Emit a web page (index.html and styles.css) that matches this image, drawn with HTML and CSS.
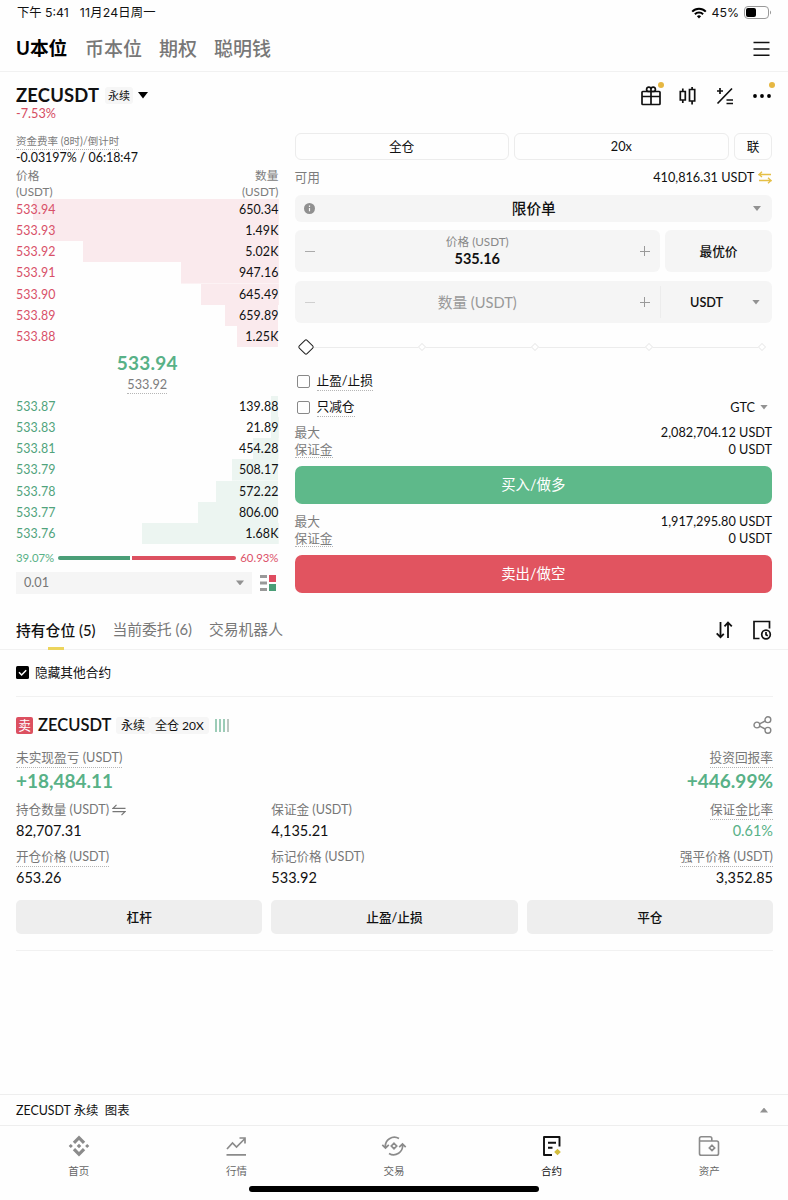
FILE: index.html
```html
<!DOCTYPE html>
<html lang="zh-CN">
<head>
  <meta charset="UTF-8">
  <meta name="viewport" content="width=device-width, initial-scale=1.0">
  <title>ZECUSDT 永续</title>
  <link rel="stylesheet" href="styles.css">
</head>
<body>
  <div class="status-bar">
    <span>下午 5:41</span>
    <span class="status-date">11月24日周一</span>
    <div class="status-right">
      <svg width="16" height="12" viewBox="0 0 16 12" fill="none" stroke="#000" stroke-width="2"><path d="M1.2 4.6a9.6 9.6 0 0 1 13.6 0M3.9 7.3a5.8 5.8 0 0 1 8.2 0"/><path d="M8 11.4 5.9 9.3a3 3 0 0 1 4.2 0z" fill="#000" stroke="none"/></svg>
      <span>45%</span>
      <svg width="28" height="13" viewBox="0 0 28 13"><rect x=".5" y=".5" width="24" height="12" rx="3.5" fill="none" stroke="#999"/><rect x="2" y="2" width="10" height="9" rx="2"/><path d="M26 4.5v4c1.4-.6 1.4-3.4 0-4z" fill="#999"/></svg>
    </div>
  </div>

  <header class="header">
    <span class="active">U本位</span>
    <span>币本位</span>
    <span>期权</span>
    <span>聪明钱</span>
    <svg class="push" width="17" height="16" viewBox="0 0 17 16" stroke="#111" stroke-width="1.6"><path d="M.5 1.5h16M.5 8h16M.5 14.3h16"/></svg>
  </header>

  <section class="symbol">
    <div class="symbol-row">
      <h1>ZECUSDT</h1>
      <span class="tag tag-small">永续</span>
      <svg class="symbol-arrow" width="10" height="7" viewBox="0 0 10 7"><path d="M0 0h10L5 6.5z"/></svg>
      <div class="tools">
        <span class="tool dot">
          <svg width="22" height="22" viewBox="0 0 22 22" fill="none" stroke="#111" stroke-width="1.7"><rect x="2" y="6.5" width="18" height="13" rx=".8"/><path d="M2 11.500h18M11 6.500v13M11 6.500H8.300A2.200 2.200 0 1 1 11 4.200zM11 6.500h2.700A2.200 2.200 0 1 0 11 4.200z"/></svg>
        </span>
        <span class="tool">
          <svg width="22" height="22" viewBox="0 0 22 22" fill="none" stroke="#111" stroke-width="1.7"><path d="M3.300 6.500h5v8.500h-5zM5.800 3.500v3M5.800 15v3M12.500 4.500h5.200v11.500h-5.200zM15.100 2v2.500M15.100 16v3.500"/></svg>
        </span>
        <span class="tool">
          <svg width="22" height="22" viewBox="0 0 22 22" fill="none" stroke="#111" stroke-width="1.7"><path d="M3.500 18.500 18 3.500M6 3v6M3 6h6M12.500 15H19M12.500 18.500H19"/></svg>
        </span>
        <span class="tool dot">
          <svg width="22" height="22" viewBox="0 0 22 22"><circle cx="4" cy="11" r="1.9"/><circle cx="11" cy="11" r="1.9"/><circle cx="18" cy="11" r="1.9"/></svg>
        </span>
      </div>
    </div>
    <div class="change">-7.53%</div>
  </section>

  <main class="trade">
    <section class="book">
      <div class="funding">
        <span class="dotted">资金费率 (8时)/倒计时</span>
        <div>-0.03197% / 06:18:47</div>
      </div>
      <div class="book-head">
        <span>价格<br>(USDT)</span>
        <span>数量<br>(USDT)</span>
      </div>
      <div class="asks">
        <div class="level" style="--depth: 93.5%"><span>533.94</span><b>650.34</b></div>
        <div class="level" style="--depth: 87%"><span>533.93</span><b>1.49K</b></div>
        <div class="level" style="--depth: 74.5%"><span>533.92</span><b>5.02K</b></div>
        <div class="level" style="--depth: 37.2%"><span>533.91</span><b>947.16</b></div>
        <div class="level" style="--depth: 29.6%"><span>533.90</span><b>645.49</b></div>
        <div class="level" style="--depth: 20.3%"><span>533.89</span><b>659.89</b></div>
        <div class="level" style="--depth: 15.6%"><span>533.88</span><b>1.25K</b></div>
      </div>
      <div class="last">
        <div class="last-price">533.94</div>
        <span class="dotted">533.92</span>
      </div>
      <div class="bids">
        <div class="level" style="--depth: 2.7%"><span>533.87</span><b>139.88</b></div>
        <div class="level" style="--depth: 3%"><span>533.83</span><b>21.89</b></div>
        <div class="level" style="--depth: 9.7%"><span>533.81</span><b>454.28</b></div>
        <div class="level" style="--depth: 17.5%"><span>533.79</span><b>508.17</b></div>
        <div class="level" style="--depth: 23.7%"><span>533.78</span><b>572.22</b></div>
        <div class="level" style="--depth: 30.5%"><span>533.77</span><b>806.00</b></div>
        <div class="level" style="--depth: 52%"><span>533.76</span><b>1.68K</b></div>
      </div>
      <div class="ratio">
        <span class="green">39.07%</span>
        <i class="ratio-buy" style="flex-grow: 41"></i>
        <i class="ratio-sell" style="flex-grow: 59"></i>
        <span class="red">60.93%</span>
      </div>
      <div class="book-foot">
        <div class="step">0.01 <i class="caret"></i></div>
        <svg width="16" height="16" viewBox="0 0 16 16"><path d="M0 0h7v3H0zM0 6.5h7v3H0zM0 13h7v3H0z" fill="#999"/><path d="M9 0h7v7H9z" fill="#df4c60"/><path d="M9 9h7v7H9z" fill="#4a9e77"/></svg>
      </div>
    </section>

    <section class="order">
      <div class="modes">
        <span>全仓</span>
        <span>20x</span>
        <span>联</span>
      </div>
      <div class="line available">
        <span class="muted">可用</span>
        <span>410,816.31 USDT
          <svg width="14" height="13" viewBox="0 0 14 13" fill="none" stroke="#e5bf45" stroke-width="1.3"><path d="M13 3.500H1L4 .7M1 3.500l3 2.600M1 9.500h12l-3-2.700M13 9.500l-3 2.700"/></svg>
        </span>
      </div>
      <div class="field order-type">
        <svg width="11" height="11" viewBox="0 0 11 11"><circle cx="5.5" cy="5.5" r="5.5" fill="#909090"/><path d="M5.5 5v3.200M5.500 2.600v1.300" stroke="#f5f5f5" stroke-width="1.2"/></svg>
        <strong>限价单</strong>
        <i class="caret"></i>
      </div>
      <div class="price-row">
        <div class="field stepper">
          <i class="minus"></i>
          <div class="stepper-value"><small>价格 (USDT)</small><strong>535.16</strong></div>
          <i class="plus"></i>
        </div>
        <div class="field best">最优价</div>
      </div>
      <div class="field amount">
        <div class="stepper">
          <i class="minus off"></i>
          <span class="placeholder">数量 (USDT)</span>
          <i class="plus"></i>
        </div>
        <div class="unit"><span>USDT</span><i class="caret"></i></div>
      </div>
      <div class="slider">
        <i class="knob"></i><i></i><i></i><i></i><i></i>
      </div>
      <div class="check-row"><i class="box"></i><span class="dotted">止盈/止损</span></div>
      <div class="check-row"><i class="box"></i><span class="dotted">只减仓</span><span class="gtc">GTC <i class="caret"></i></span></div>
      <div class="limits">
        <div class="line"><span class="muted">最大</span><span>2,082,704.12 USDT</span></div>
        <div class="line"><span class="muted dotted">保证金</span><span>0 USDT</span></div>
      </div>
      <div class="btn buy">买入/做多</div>
      <div class="limits">
        <div class="line"><span class="muted">最大</span><span>1,917,295.80 USDT</span></div>
        <div class="line"><span class="muted dotted">保证金</span><span>0 USDT</span></div>
      </div>
      <div class="btn sell">卖出/做空</div>
    </section>
  </main>

  <nav class="tabs">
    <span class="active">持有仓位 (5)</span>
    <span>当前委托 (6)</span>
    <span>交易机器人</span>
    <svg class="push" width="18" height="18" viewBox="0 0 18 18" fill="none" stroke="#111" stroke-width="1.8"><path d="M5.500 1v15M1.700 12.300l3.800 3.900 3.300-3.400M13 17V2M9.500 5.300 13 1.600l3.800 3.700"/></svg>
    <svg width="20" height="20" viewBox="0 0 20 20" fill="none" stroke="#111" stroke-width="1.7"><path d="M7.500 18.500H2V1.500h15.500v7"/><circle cx="14" cy="14.5" r="4.3"/><path d="M14 12v2.700l1.800 1"/></svg>
  </nav>

  <section class="positions">
    <div class="hide-others">
      <svg width="13" height="13" viewBox="0 0 13 13"><rect width="13" height="13" rx="1.5"/><path d="M3 6.300 5.600 9l4.600-4.800" fill="none" stroke="#fff" stroke-width="1.5"/></svg>
      <span>隐藏其他合约</span>
    </div>

    <article class="position">
      <div class="position-head">
        <span class="side">卖</span>
        <h2>ZECUSDT</h2>
        <span class="tag">永续</span><span class="tag">全仓 20X</span>
        <svg class="adl" width="14" height="13" viewBox="0 0 14 13" fill="none" stroke-width="1.2"><path d="M1 0v13M5 0v13M9 0v13" stroke="#5bab88"/><path d="M13 0v13" stroke="#8fa298"/></svg>
        <svg class="push" width="20" height="20" viewBox="0 0 20 20" fill="none" stroke="#858585" stroke-width="1.4"><circle cx="3.900" cy="10" r="2.900"/><circle cx="14.900" cy="4.700" r="2.900"/><circle cx="14.900" cy="15.300" r="2.900"/><path d="m6.600 8.800 5.600-2.800M6.600 11.200l5.600 2.800"/></svg>
      </div>
      <div class="pnl">
        <div><span class="dotted">未实现盈亏 (USDT)</span><b>+18,484.11</b></div>
        <div><span class="dotted">投资回报率</span><b>+446.99%</b></div>
      </div>
      <div class="stats">
        <div>
          <span>持仓数量 (USDT)
            <svg width="14" height="12" viewBox="0 0 14 12" fill="none" stroke="#777" stroke-width="1.2"><path d="M4.500.8 1 4.300h12.500M.5 7.700H13L9.500 11.200"/></svg>
          </span>
          <b>82,707.31</b>
        </div>
        <div><span>保证金 (USDT)</span><b>4,135.21</b></div>
        <div><span class="dotted">保证金比率</span><b class="green">0.61%</b></div>
        <div><span class="dotted">开仓价格 (USDT)</span><b>653.26</b></div>
        <div><span>标记价格 (USDT)</span><b>533.92</b></div>
        <div><span class="dotted">强平价格 (USDT)</span><b>3,352.85</b></div>
      </div>
      <div class="actions">
        <span>杠杆</span>
        <span>止盈/止损</span>
        <span>平仓</span>
      </div>
    </article>
  </section>

  <div class="chart-bar"><span>ZECUSDT 永续&nbsp; 图表</span><i class="caret up"></i></div>

  <nav class="bottom-nav">
    <div>
      <svg width="22" height="22" viewBox="0 0 22 22" fill="#8b8b8b"><path d="M11 .5 17.200 6.700 14.900 9 11 5.100 7.100 9 4.800 6.700zM11 21.500 4.800 15.300 7.100 13l3.900 3.900 3.900-3.900 2.300 2.300zM11 8.700l2.300 2.300-2.300 2.300L8.700 11zM2.800 8.900 4.900 11l-2.100 2.100L.7 11zM19.200 8.900l2.100 2.100-2.100 2.100-2.100-2.100z"/></svg>
      <span>首页</span>
    </div>
    <div>
      <svg width="22" height="22" viewBox="0 0 22 22" fill="none" stroke="#8b8b8b" stroke-width="1.7"><path d="M2 14 7.500 8l4 4L20 3.500M14.500 3h5.500v5.500M1.500 19.800h19.500"/></svg>
      <span>行情</span>
    </div>
    <div>
      <svg width="26" height="22" viewBox="0 0 26 22" fill="none" stroke="#8b8b8b" stroke-width="1.700"><path d="M18 3.500A9 9 0 0 0 4.500 12.500M1.300 9.800l3.200 3.200 3.300-3.200M8 18.500A9 9 0 0 0 21.500 9.500M24.700 12.200 21.500 9l-3.300 3.200"/><path d="m13 8.300 2.700 2.700-2.700 2.700-2.700-2.700z"/></svg>
      <span>交易</span>
    </div>
    <div class="active">
      <svg width="22" height="22" viewBox="0 0 22 22" fill="none" stroke="#111" stroke-width="1.9" stroke-linejoin="round"><path d="M11 20H3V2h15.500v9.500M7 7.700h8M7 12.700h4.500"/><path d="m16.500 13.700 3.300 3.300-3.300 3.300-3.300-3.300z" fill="#d3bd3d" stroke="none"/></svg>
      <span>合约</span>
    </div>
    <div>
      <svg width="22" height="22" viewBox="0 0 22 22" fill="none" stroke="#8b8b8b" stroke-width="1.6"><path d="M1.500 6V3.500q0-1.800 1.800-1.800H12q1.800 0 1.800 1.800V6M1.500 6h17.200q1.800 0 1.800 1.800v10.600q0 1.800-1.800 1.800H3.300q-1.800 0-1.800-1.800zM14 10.200l2.700 2.700-2.700 2.700-2.700-2.700z"/></svg>
      <span>资产</span>
    </div>
  </nav>
  <div class="home-indicator"></div>
</body>
</html>
```

FILE: styles.css
```css
* {
  box-sizing: border-box;
}
body {
  margin: 0;
  width: 788px;
  height: 1200px;
  overflow: hidden;
  display: flex;
  flex-direction: column;
  background: #fefefe;
  color: #111;
  font-family: Lato, "Noto Sans CJK SC", sans-serif;
  font-size: 12.7px;
  line-height: 17px;
}
h1, h2 {
  margin: 0;
  font-weight: bold;
}
i {
  display: block;
  flex: none;
}
svg {
  display: block;
  flex: none;
}
.push {
  margin-left: auto;
}
.muted {
  color: #7c7c7c;
}
.green {
  color: #58b187;
}
.red {
  color: #dc5269;
}
.dotted {
  border-bottom: 1px dotted #b5b5b5;
}
.caret {
  width: 8px;
  height: 5px;
  background: #929292;
  clip-path: polygon(0 0, 100% 0, 50% 100%);
}
.caret.up {
  clip-path: polygon(50% 0, 100% 100%, 0 100%);
}
.tag {
  padding: 0 5px;
  border-radius: 3px;
  background: #f6f6f6;
  font-size: 12px;
}
.tag-small {
  padding: 0 3px;
  font-size: 11px;
}

/* top bars */
.status-bar {
  display: flex;
  align-items: center;
  height: 26px;
  padding: 0 16px 1px 17px;
  font-family: Inter, "Noto Sans CJK SC", sans-serif;
  font-size: 12.3px;
}
.status-date {
  margin-left: 11px;
  letter-spacing: .2px;
}
.status-right {
  display: flex;
  align-items: center;
  gap: 5px;
  margin-left: auto;
}
.header {
  display: flex;
  align-items: center;
  gap: 17px;
  height: 46px;
  padding: 0 18px 0 16px;
  border-bottom: 1px solid #f1f1f1;
  color: #777;
  font-size: 19px;
  font-weight: 500;
}
.header .active {
  width: 52px;
  color: #000;
  font-weight: bold;
  font-size: 18.7px;
}

/* symbol */
.symbol {
  height: 61px;
  padding: 12px 15px 0 16px;
}
.symbol-row {
  display: flex;
  align-items: center;
  height: 23px;
}
.symbol h1 {
  width: 84px;
  margin-right: 5px;
  font-size: 18.4px;
  letter-spacing: .2px;
}
.symbol-arrow {
  margin-left: 5px;
}
.tools {
  display: flex;
  gap: 15px;
  margin-left: auto;
}
.tool {
  position: relative;
}
.dot::after {
  content: "";
  position: absolute;
  top: -3px;
  right: -2px;
  width: 6px;
  height: 6px;
  border-radius: 50%;
  background: #e6b742;
}
.change {
  color: #d54c62;
  line-height: 13px;
}

/* order book */
.trade {
  display: grid;
  grid-template-columns: 262.5px 477.5px;
  column-gap: 16px;
  height: 471px;
  padding-left: 16px;
}
.funding {
  height: 35px;
  line-height: 15px;
  font-size: 12.4px;
}
.funding .dotted {
  display: inline-block;
  height: 16px;
  color: #7c7c7c;
  font-size: 10.5px;
}
.book-head {
  display: flex;
  justify-content: space-between;
  height: 31px;
  color: #7c7c7c;
  font-size: 11.7px;
  line-height: 15.5px;
}
.book-head span:last-child {
  text-align: right;
}
.level {
  display: flex;
  justify-content: space-between;
  height: 21.15px;
  font-size: 12.4px;
  letter-spacing: .12px;
  line-height: 22px;
  background: linear-gradient(#faeaed, #faeaed) right / var(--depth) 100% no-repeat;
}
.level span {
  color: #d85068;
}
.level b {
  font-weight: normal;
}
.bids .level {
  background-image: linear-gradient(#ecf5f1, #ecf5f1);
}
.bids .level span {
  color: #50a37c;
}
.last {
  height: 49px;
  padding-top: 5px;
  text-align: center;
}
.last-price {
  color: #58b187;
  font-size: 19px;
  font-weight: bold;
  letter-spacing: .2px;
  line-height: 22px;
}
.last .dotted {
  display: inline-block;
  height: 20px;
  line-height: 21px;
  color: #7c7c7c;
}
.ratio {
  display: flex;
  align-items: center;
  gap: 2px;
  height: 28px;
  font-size: 11.4px;
}
.ratio i {
  flex: 1 1 0;
  height: 4px;
  background: #4a9e77;
  border-radius: 2px 0 0 2px;
}
.ratio .ratio-sell {
  background: #dc5060;
  border-radius: 0 2px 2px 0;
}
.ratio .green {
  margin-right: 2px;
}
.ratio .red {
  margin-left: 2px;
}
.book-foot {
  display: flex;
  align-items: center;
  justify-content: space-between;
  padding-right: 3px;
}
.step {
  display: flex;
  align-items: center;
  justify-content: space-between;
  width: 236px;
  height: 22px;
  padding: 0 8px;
  background: #f5f5f5;
  color: #777;
}

/* order form */
.modes {
  display: grid;
  grid-template-columns: 1fr 1fr 38px;
  gap: 5.5px;
  line-height: 25px;
  text-align: center;
}
.modes span {
  border: 1px solid #ececec;
  border-radius: 6px;
}
.line {
  display: flex;
  justify-content: space-between;
}
.available {
  height: 35px;
  line-height: 35px;
}
.available svg {
  display: inline-block;
  margin-left: 1px;
  vertical-align: -2px;
}
.field {
  display: flex;
  align-items: center;
  background: #f5f5f5;
  border-radius: 6px;
}
.order-type {
  justify-content: space-between;
  height: 27px;
  padding: 0 11px 0 9px;
  font-size: 14.7px;
}
.order-type strong {
  font-weight: 500;
}
.price-row {
  display: grid;
  grid-template-columns: 365.5px 107px;
  gap: 5px;
  height: 42px;
  margin: 8px 0 9px;
}
.stepper {
  display: flex;
  align-items: center;
  justify-content: space-between;
  padding: 0 10px;
}
.stepper-value {
  display: flex;
  flex-direction: column;
  align-items: center;
  padding-bottom: 2px;
  font-size: 14.5px;
}
.stepper-value small {
  color: #888;
  font-size: 11.7px;
}
.minus, .plus {
  width: 10px;
  height: 10px;
  background: linear-gradient(#aaa, #aaa) center / 10px 1px no-repeat;
}
.plus {
  background: linear-gradient(#999, #999) center / 10px 1px no-repeat, linear-gradient(#999, #999) center / 1px 10px no-repeat;
}
.off {
  opacity: .5;
}
.best {
  justify-content: center;
  font-weight: 500;
}
.amount {
  height: 42px;
}
.amount .stepper {
  flex: 1;
}
.placeholder {
  color: #999;
  font-size: 14.7px;
}
.unit {
  display: flex;
  align-items: center;
  justify-content: space-between;
  width: 112px;
  height: 32px;
  padding: 0 12px 0 29px;
  border-left: 1px solid #ececec;
  font-weight: 600;
}
.slider {
  display: flex;
  align-items: center;
  justify-content: space-between;
  height: 45px;
  padding: 3px 7px 0 5px;
  background: linear-gradient(#ececec, #ececec) 14px 24px / 454px 1px no-repeat;
}
.slider i {
  width: 6px;
  height: 6px;
  border: 1px solid #ececec;
  background: #fff;
  transform: rotate(45deg);
}
.slider .knob {
  width: 12px;
  height: 12px;
  border: 1.5px solid #222;
  border-radius: 2px;
}
.check-row {
  display: flex;
  align-items: center;
  height: 26px;
  gap: 7px;
  padding-left: 2px;
}
.check-row .dotted {
  height: 20px;
  line-height: 19px;
}
.box {
  width: 13px;
  height: 13px;
  border: 1px solid #888;
  border-radius: 2px;
}
.gtc {
  display: flex;
  align-items: center;
  gap: 5px;
  margin-left: auto;
  padding-right: 4px;
}
.limits {
  height: 46px;
  padding-top: 4px;
}
.limits .dotted {
  height: 17px;
}
.btn {
  height: 38px;
  margin-bottom: 5px;
  border-radius: 7px;
  color: #fff;
  font-size: 14.4px;
  line-height: 37px;
  text-align: center;
}
.buy {
  background: #5eb98a;
}
.sell {
  background: #e15460;
}

/* positions */
.tabs {
  display: flex;
  align-items: center;
  gap: 17px;
  height: 46px;
  padding: 6px 16px 0;
  border-bottom: 1px solid #f1f1f1;
  color: #777;
  font-size: 14.8px;
}
.tabs .active {
  height: 40px;
  line-height: 40px;
  color: #111;
  font-weight: 500;
  background: linear-gradient(#ecd45c, #ecd45c) center bottom / 16px 3px no-repeat;
}
.tabs svg + svg {
  margin-left: 2px;
}
.positions {
  padding: 0 15px 0 16px;
}
.hide-others {
  display: flex;
  align-items: center;
  gap: 6px;
  height: 47px;
  padding-bottom: 1px;
  border-bottom: 1px solid #f1f1f1;
}
.position {
  height: 254px;
  border-bottom: 1px solid #f1f1f1;
}
.position-head {
  display: flex;
  align-items: center;
  height: 52px;
  padding-top: 4px;
}
.side {
  width: 17px;
  height: 17px;
  margin-right: 5px;
  border-radius: 2px;
  background: #dc5060;
  color: #fff;
  text-align: center;
}
.position h2 {
  width: 74px;
  margin-right: 4px;
  font-size: 16.5px;
  font-weight: 600;
}
.adl {
  margin-left: 6px;
}
.pnl {
  display: flex;
  justify-content: space-between;
  height: 52px;
  color: #777;
}
.pnl .dotted {
  display: table;
  height: 19px;
}
.pnl div:last-child .dotted {
  margin-left: auto;
}
.pnl b {
  display: block;
  color: #58b187;
  font-size: 19px;
  line-height: 25px;
}
.stats {
  display: grid;
  grid-template-columns: 1fr 1fr 1fr;
  column-gap: 9px;
  grid-auto-rows: 47px;
}
.stats div {
  display: flex;
  flex-direction: column;
  align-items: flex-start;
}
.stats div:nth-child(3n) {
  align-items: flex-end;
}
.stats span {
  height: 19px;
  color: #777;
  font-size: 12.6px;
  line-height: 18px;
}
.stats b {
  font-size: 14.5px;
  font-weight: normal;
  line-height: 22px;
}
.stats svg {
  display: inline-block;
  vertical-align: -2px;
}
.actions {
  display: grid;
  grid-template-columns: 1fr 1fr 1fr;
  gap: 9px;
  margin-top: 5px;
  line-height: 34px;
  text-align: center;
  font-weight: 500;
}
.actions span {
  border-radius: 5px;
  background: #eee;
}

/* bottom */
.chart-bar {
  display: flex;
  align-items: center;
  justify-content: space-between;
  height: 32px;
  margin-top: auto;
  padding: 0 20px 0 16px;
  border: solid #eee;
  border-width: 1px 0;
  font-size: 12.4px;
}
.bottom-nav {
  display: grid;
  grid-template-columns: repeat(5, 1fr);
  height: 60px;
  padding-top: 9px;
  color: #666;
  font-size: 10.5px;
}
.bottom-nav div {
  display: flex;
  flex-direction: column;
  align-items: center;
  gap: 6px;
}
.bottom-nav .active {
  color: #111;
}
.home-indicator {
  flex: none;
  width: 290px;
  height: 6px;
  margin: 0 auto 8px;
  border-radius: 3px;
  background: #000;
}
```
